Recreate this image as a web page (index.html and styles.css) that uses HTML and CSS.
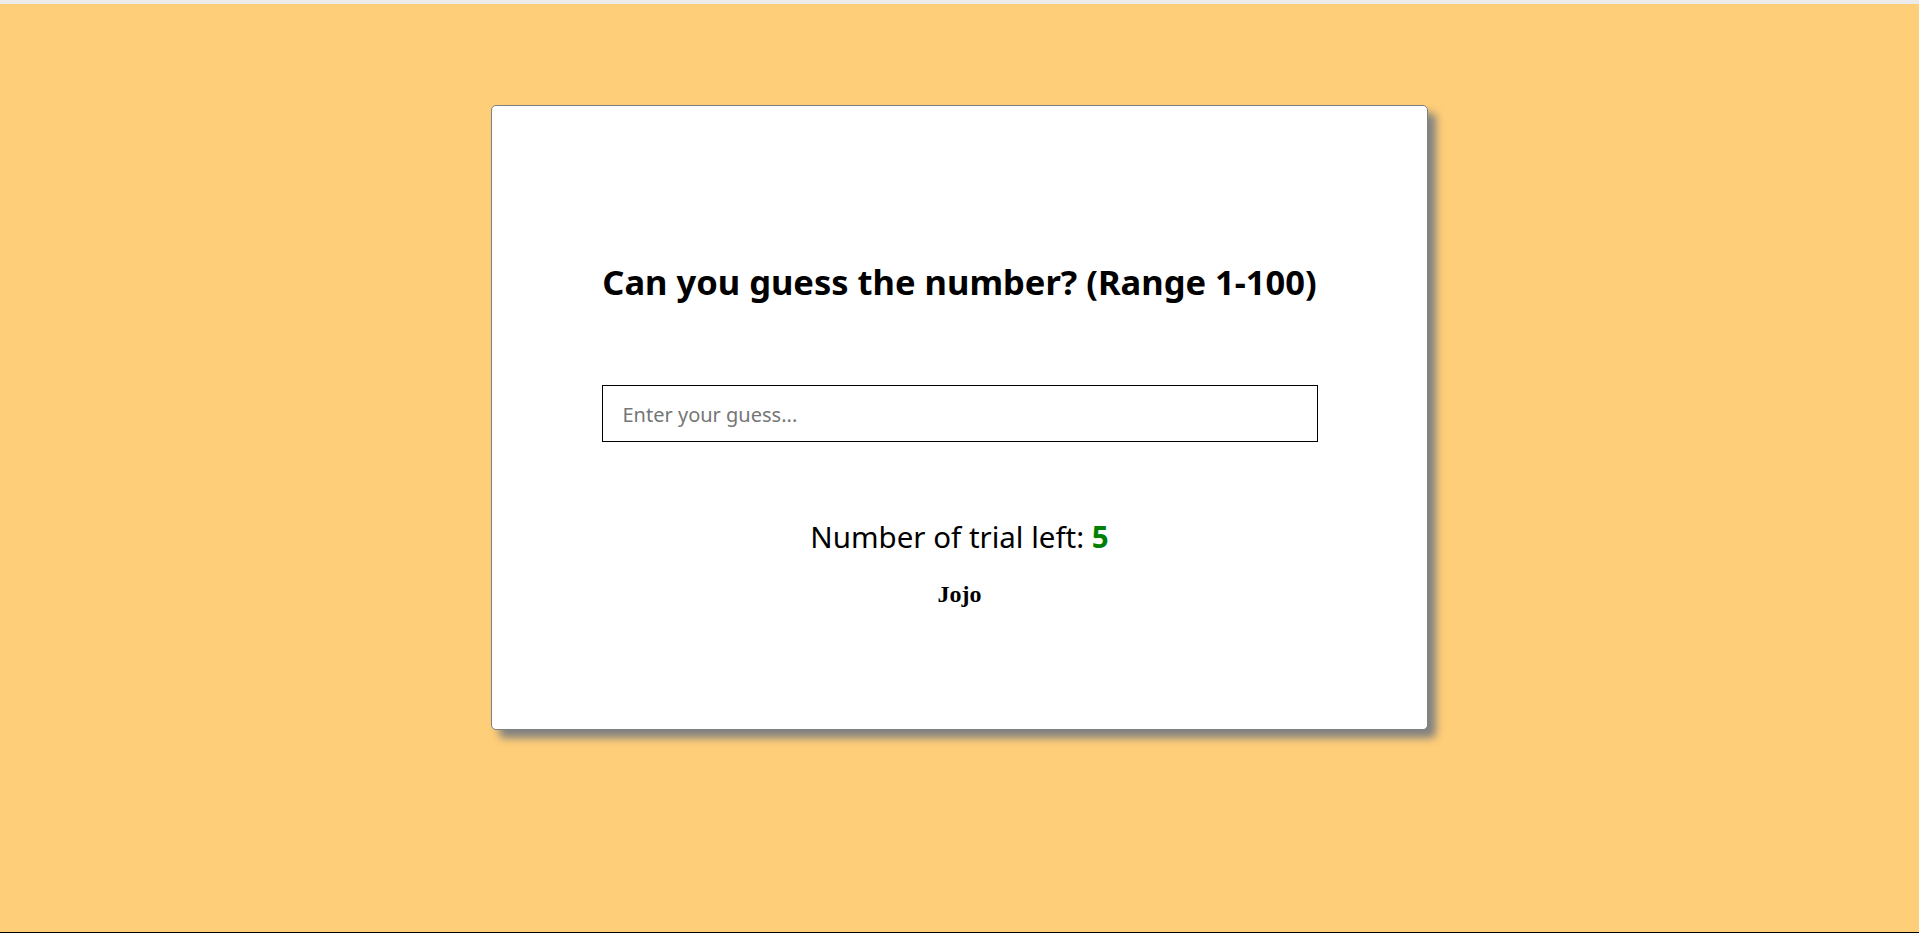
FILE: index.html
```html
<!DOCTYPE html>
<html lang="en">
<head>
<meta charset="utf-8">
<title>Guess the number</title>
<link rel="stylesheet" href="styles.css">
</head>
<body>
<div class="topbar"></div>
<main class="stage">
  <section class="card">
    <h1 class="title">Can you guess the number? (Range 1-100)</h1>
    <input class="guess" type="text" placeholder="Enter your guess...">
    <p class="trials">Number of trial left: <span class="count">5</span></p>
    <h2 class="name">Jojo</h2>
  </section>
</main>
<div class="bottomline"></div>
</body>
</html>
```
FILE: styles.css
```css
html, body {
  margin: 0;
  padding: 0;
  height: 100%;
}
body {
  display: flex;
  flex-direction: column;
  background: #ffce78;
  font-family: "Noto Sans", "Open Sans", sans-serif;
}
.topbar {
  height: 4px;
  background: #ebebeb;
  flex: none;
}
.stage {
  flex: 1;
  display: flex;
  flex-direction: column;
  align-items: center;
  padding-top: 101px;
  background: #ffce78;
}
.bottomline {
  height: 1px;
  background: #000;
  flex: none;
}
.card {
  box-sizing: border-box;
  width: 937px;
  height: 625px;
  background: #fff;
  border: 1px solid #808080;
  border-radius: 5px;
  box-shadow: 8px 8px 8px #808080;
  display: flex;
  flex-direction: column;
  align-items: center;
  padding: 156px 110px 0;
}
.title {
  margin: 0;
  font-size: 34.5px;
  line-height: 40px;
  font-weight: 700;
  color: #000;
  white-space: nowrap;
}
.guess {
  box-sizing: border-box;
  margin-top: 83px;
  width: 716px;
  height: 57px;
  border: 1px solid #000;
  border-radius: 0;
  padding: 2px 20px 0;
  font-family: "Noto Sans", "Open Sans", sans-serif;
  font-size: 20px;
  outline: none;
}
.guess::placeholder {
  color: #767676;
}
.trials {
  margin: 77px 0 0;
  font-size: 29.5px;
  line-height: 36px;
  color: #000;
}
.count {
  color: #008000;
  font-weight: 700;
}
.name {
  margin: 25px 0 0;
  font-family: "Liberation Serif", "Times New Roman", serif;
  font-size: 24px;
  line-height: 28px;
  font-weight: 700;
}
```
